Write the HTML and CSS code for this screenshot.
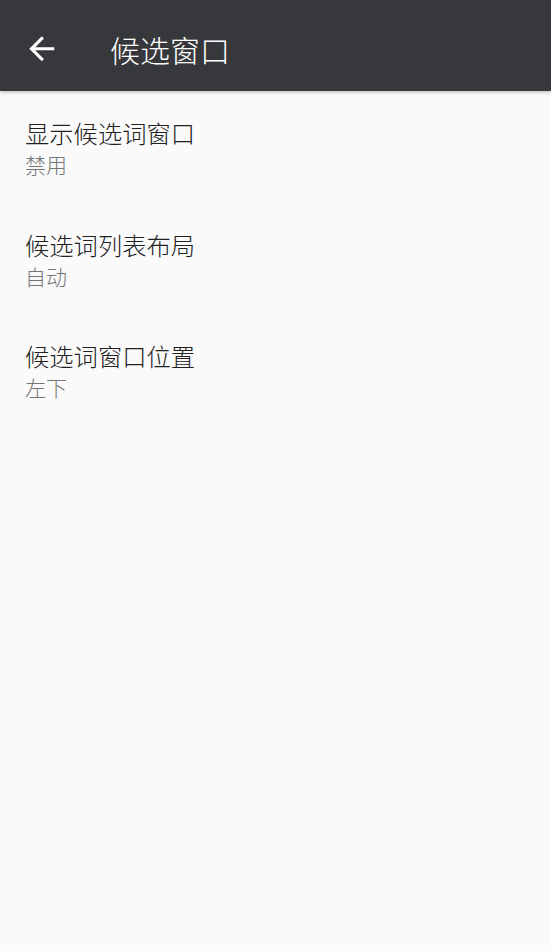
FILE: index.html
```html
<!DOCTYPE html>
<html lang="zh-CN">
<head>
<meta charset="utf-8">
<title>候选窗口</title>
<link rel="stylesheet" href="styles.css">
</head>
<body>
<header class="appbar">
  <button class="nav-btn" aria-label="返回">
    <svg class="nav-icon" viewBox="0 0 24 24" width="37.5" height="37.5"><path d="M20 11H7.83l5.59-5.59L12 4l-8 8 8 8 1.41-1.41L7.83 13H20v-2z" fill="#ffffff"/></svg>
  </button>
  <h1 class="appbar-title">候选窗口</h1>
</header>
<main class="pref-list">
  <div class="pref-item">
    <div class="pref-title">显示候选词窗口</div>
    <div class="pref-summary">禁用</div>
  </div>
  <div class="pref-item">
    <div class="pref-title">候选词列表布局</div>
    <div class="pref-summary">自动</div>
  </div>
  <div class="pref-item">
    <div class="pref-title">候选词窗口位置</div>
    <div class="pref-summary">左下</div>
  </div>
</main>
</body>
</html>
```
FILE: styles.css
```css
html, body {
  margin: 0;
  padding: 0;
  background: #fafafa;
  height: 100%;
}
body {
  font-family: "Noto Sans CJK SC", "Noto Sans", sans-serif;
}
.appbar {
  position: relative;
  z-index: 1;
  box-sizing: border-box;
  height: 91px;
  padding-top: 6px;
  background: #37383c;
  display: flex;
  align-items: center;
  box-shadow: 0 1px 4px rgba(0, 0, 0, 0.28);
}
.nav-btn {
  margin: 0 0 0 23px;
  padding: 0;
  border: 0;
  background: none;
  width: 37.5px;
  height: 37.5px;
  display: flex;
  align-items: center;
  justify-content: center;
}
.nav-icon {
  display: block;
}
.appbar-title {
  margin: 0 0 0 49.5px;
  font-size: 30px;
  font-weight: 300;
  line-height: 36px;
  color: #ffffff;
}
.pref-list {
  display: flex;
  flex-direction: column;
}
.pref-item {
  padding: 26px 25px 23.5px 25px;
}
.pref-title {
  font-size: 24.3px;
  font-weight: 300;
  line-height: 32px;
  color: #212121;
}
.pref-summary {
  font-size: 21px;
  font-weight: 300;
  line-height: 30px;
  color: #757575;
}
```
